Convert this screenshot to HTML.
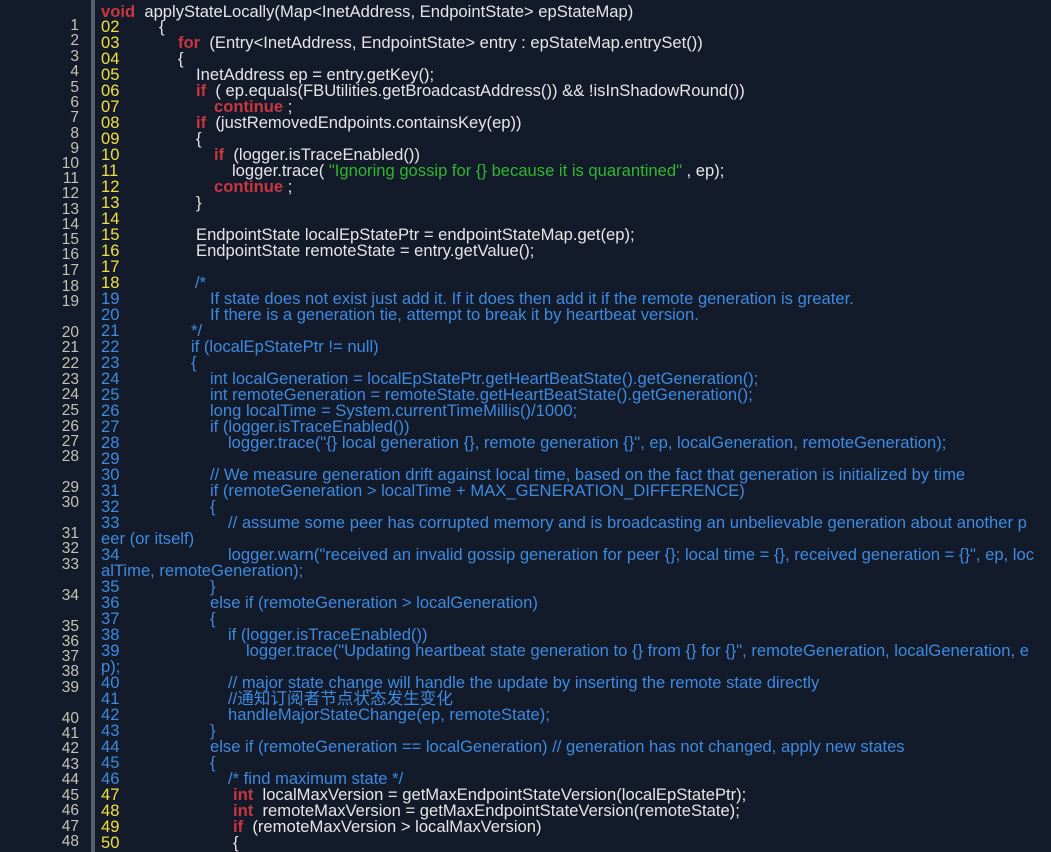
<!DOCTYPE html>
<html><head><meta charset="utf-8"><style>
html,body{margin:0;padding:0}
body{width:1051px;height:852px;background:#131a29;position:relative;overflow:hidden;font-family:"Liberation Sans","Noto Sans CJK SC",sans-serif;font-size:15px;}
.g{position:absolute;right:972px;color:#c4c4b4;line-height:18px;height:18px;text-align:right;font-size:15.5px}
.bar{position:absolute;left:91px;top:0;width:4px;height:852px;background:#56606a}
.l{position:absolute;left:101px;line-height:18px;height:18px;white-space:pre;color:#e6e6e6;font-size:16.6px}
.n{position:absolute;left:0;color:#f0e040}
.nb{position:absolute;left:0;color:#3d8ae0}
.c{position:absolute;white-space:pre}
.k{color:#c83640;font-weight:bold}
.s{color:#2fb82f}
.b{color:#3d8ae0}
</style></head><body>
<div class="bar"></div>
<div class="g" style="top:17px">1</div>
<div class="g" style="top:32px">2</div>
<div class="g" style="top:48px">3</div>
<div class="g" style="top:63px">4</div>
<div class="g" style="top:79px">5</div>
<div class="g" style="top:94px">6</div>
<div class="g" style="top:109px">7</div>
<div class="g" style="top:125px">8</div>
<div class="g" style="top:140px">9</div>
<div class="g" style="top:155px">10</div>
<div class="g" style="top:170px">11</div>
<div class="g" style="top:185px">12</div>
<div class="g" style="top:201px">13</div>
<div class="g" style="top:216px">14</div>
<div class="g" style="top:231px">15</div>
<div class="g" style="top:246px">16</div>
<div class="g" style="top:262px">17</div>
<div class="g" style="top:278px">18</div>
<div class="g" style="top:293px">19</div>
<div class="g" style="top:324px">20</div>
<div class="g" style="top:339px">21</div>
<div class="g" style="top:355px">22</div>
<div class="g" style="top:371px">23</div>
<div class="g" style="top:386px">24</div>
<div class="g" style="top:402px">25</div>
<div class="g" style="top:418px">26</div>
<div class="g" style="top:433px">27</div>
<div class="g" style="top:448px">28</div>
<div class="g" style="top:479px">29</div>
<div class="g" style="top:494px">30</div>
<div class="g" style="top:525px">31</div>
<div class="g" style="top:540px">32</div>
<div class="g" style="top:556px">33</div>
<div class="g" style="top:587px">34</div>
<div class="g" style="top:618px">35</div>
<div class="g" style="top:633px">36</div>
<div class="g" style="top:648px">37</div>
<div class="g" style="top:663px">38</div>
<div class="g" style="top:679px">39</div>
<div class="g" style="top:710px">40</div>
<div class="g" style="top:725px">41</div>
<div class="g" style="top:740px">42</div>
<div class="g" style="top:756px">43</div>
<div class="g" style="top:771px">44</div>
<div class="g" style="top:787px">45</div>
<div class="g" style="top:802px">46</div>
<div class="g" style="top:818px">47</div>
<div class="g" style="top:833px">48</div>

<div class="l" style="top:3px"><span class="c" style="left:0"><span class="k">void</span>  applyStateLocally(Map&lt;InetAddress, EndpointState&gt; epStateMap)</span></div>
<div class="l" style="top:18px"><span class="n">02</span><span class="c" style="left:58px">{</span></div>
<div class="l" style="top:34px"><span class="n">03</span><span class="c" style="left:77px"><span class="k">for</span>  (Entry&lt;InetAddress, EndpointState&gt; entry : epStateMap.entrySet())</span></div>
<div class="l" style="top:50px"><span class="n">04</span><span class="c" style="left:77px">{</span></div>
<div class="l" style="top:66px"><span class="n">05</span><span class="c" style="left:95px">InetAddress ep = entry.getKey();</span></div>
<div class="l" style="top:82px"><span class="n">06</span><span class="c" style="left:95px"><span class="k">if</span>  ( ep.equals(FBUtilities.getBroadcastAddress()) &amp;&amp; !isInShadowRound())</span></div>
<div class="l" style="top:98px"><span class="n">07</span><span class="c" style="left:113px"><span class="k">continue</span> ;</span></div>
<div class="l" style="top:114px"><span class="n">08</span><span class="c" style="left:95px"><span class="k">if</span>  (justRemovedEndpoints.containsKey(ep))</span></div>
<div class="l" style="top:130px"><span class="n">09</span><span class="c" style="left:95px">{</span></div>
<div class="l" style="top:146px"><span class="n">10</span><span class="c" style="left:113px"><span class="k">if</span>  (logger.isTraceEnabled())</span></div>
<div class="l" style="top:162px"><span class="n">11</span><span class="c" style="left:131px">logger.trace( <span class="s">"Ignoring gossip for {} because it is quarantined"</span> , ep);</span></div>
<div class="l" style="top:178px"><span class="n">12</span><span class="c" style="left:113px"><span class="k">continue</span> ;</span></div>
<div class="l" style="top:194px"><span class="n">13</span><span class="c" style="left:95px">}</span></div>
<div class="l" style="top:210px"><span class="n">14</span></div>
<div class="l" style="top:226px"><span class="n">15</span><span class="c" style="left:95px">EndpointState localEpStatePtr = endpointStateMap.get(ep);</span></div>
<div class="l" style="top:242px"><span class="n">16</span><span class="c" style="left:95px">EndpointState remoteState = entry.getValue();</span></div>
<div class="l" style="top:258px"><span class="n">17</span></div>
<div class="l b" style="top:274px"><span class="n">18</span><span class="c" style="left:94px">/*</span></div>
<div class="l b" style="top:290px"><span class="nb">19</span><span class="c" style="left:109px">If state does not exist just add it. If it does then add it if the remote generation is greater.</span></div>
<div class="l b" style="top:306px"><span class="nb">20</span><span class="c" style="left:109px">If there is a generation tie, attempt to break it by heartbeat version.</span></div>
<div class="l b" style="top:322px"><span class="nb">21</span><span class="c" style="left:90px">*/</span></div>
<div class="l b" style="top:338px"><span class="nb">22</span><span class="c" style="left:90px">if (localEpStatePtr != null)</span></div>
<div class="l b" style="top:354px"><span class="nb">23</span><span class="c" style="left:90px">{</span></div>
<div class="l b" style="top:370px"><span class="nb">24</span><span class="c" style="left:109px">int localGeneration = localEpStatePtr.getHeartBeatState().getGeneration();</span></div>
<div class="l b" style="top:386px"><span class="nb">25</span><span class="c" style="left:109px">int remoteGeneration = remoteState.getHeartBeatState().getGeneration();</span></div>
<div class="l b" style="top:402px"><span class="nb">26</span><span class="c" style="left:109px">long localTime = System.currentTimeMillis()/1000;</span></div>
<div class="l b" style="top:418px"><span class="nb">27</span><span class="c" style="left:109px">if (logger.isTraceEnabled())</span></div>
<div class="l b" style="top:434px"><span class="nb">28</span><span class="c" style="left:127px">logger.trace("{} local generation {}, remote generation {}", ep, localGeneration, remoteGeneration);</span></div>
<div class="l b" style="top:450px"><span class="nb">29</span></div>
<div class="l b" style="top:466px"><span class="nb">30</span><span class="c" style="left:109px">// We measure generation drift against local time, based on the fact that generation is initialized by time</span></div>
<div class="l b" style="top:482px"><span class="nb">31</span><span class="c" style="left:109px">if (remoteGeneration &gt; localTime + MAX_GENERATION_DIFFERENCE)</span></div>
<div class="l b" style="top:498px"><span class="nb">32</span><span class="c" style="left:109px">{</span></div>
<div class="l b" style="top:514px"><span class="nb">33</span><span class="c" style="left:127px">// assume some peer has corrupted memory and is broadcasting an unbelievable generation about another p</span></div>
<div class="l b" style="top:530px"><span class="c" style="left:0">eer (or itself)</span></div>
<div class="l b" style="top:546px"><span class="nb">34</span><span class="c" style="left:127px">logger.warn("received an invalid gossip generation for peer {}; local time = {}, received generation = {}", ep, loc</span></div>
<div class="l b" style="top:562px"><span class="c" style="left:0">alTime, remoteGeneration);</span></div>
<div class="l b" style="top:578px"><span class="nb">35</span><span class="c" style="left:109px">}</span></div>
<div class="l b" style="top:594px"><span class="nb">36</span><span class="c" style="left:109px">else if (remoteGeneration &gt; localGeneration)</span></div>
<div class="l b" style="top:610px"><span class="nb">37</span><span class="c" style="left:109px">{</span></div>
<div class="l b" style="top:626px"><span class="nb">38</span><span class="c" style="left:127px">if (logger.isTraceEnabled())</span></div>
<div class="l b" style="top:642px"><span class="nb">39</span><span class="c" style="left:145px">logger.trace("Updating heartbeat state generation to {} from {} for {}", remoteGeneration, localGeneration, e</span></div>
<div class="l b" style="top:658px"><span class="c" style="left:0">p);</span></div>
<div class="l b" style="top:674px"><span class="nb">40</span><span class="c" style="left:127px">// major state change will handle the update by inserting the remote state directly</span></div>
<div class="l b" style="top:690px"><span class="nb">41</span><span class="c" style="left:127px">//通知订阅者节点状态发生变化</span></div>
<div class="l b" style="top:706px"><span class="nb">42</span><span class="c" style="left:127px">handleMajorStateChange(ep, remoteState);</span></div>
<div class="l b" style="top:722px"><span class="nb">43</span><span class="c" style="left:109px">}</span></div>
<div class="l b" style="top:738px"><span class="nb">44</span><span class="c" style="left:109px">else if (remoteGeneration == localGeneration) // generation has not changed, apply new states</span></div>
<div class="l b" style="top:754px"><span class="nb">45</span><span class="c" style="left:109px">{</span></div>
<div class="l b" style="top:770px"><span class="nb">46</span><span class="c" style="left:127px">/* find maximum state */</span></div>
<div class="l" style="top:786px"><span class="n">47</span><span class="c" style="left:132px"><span class="k">int</span>  localMaxVersion = getMaxEndpointStateVersion(localEpStatePtr);</span></div>
<div class="l" style="top:802px"><span class="n">48</span><span class="c" style="left:132px"><span class="k">int</span>  remoteMaxVersion = getMaxEndpointStateVersion(remoteState);</span></div>
<div class="l" style="top:818px"><span class="n">49</span><span class="c" style="left:132px"><span class="k">if</span>  (remoteMaxVersion &gt; localMaxVersion)</span></div>
<div class="l" style="top:834px"><span class="n">50</span><span class="c" style="left:132px">{</span></div>
</body></html>
